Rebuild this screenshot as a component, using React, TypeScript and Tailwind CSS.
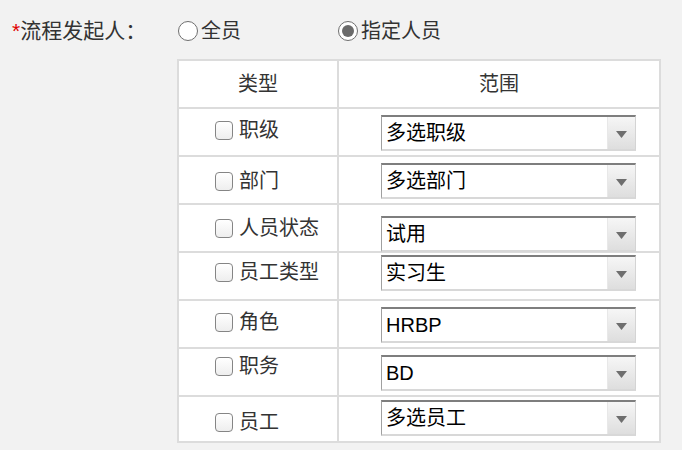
const rows = [
  { label: "职级", value: "多选职级", lt: "pt-[9px]", st: "pt-[6px]" },
  { label: "部门", value: "多选部门", lt: "pt-[12px]", st: "pt-[6px]" },
  { label: "人员状态", value: "试用", lt: "pt-[11px]", st: "pt-[11px]" },
  { label: "员工类型", value: "实习生", lt: "pt-[7px]", st: "pt-[2px]" },
  { label: "角色", value: "HRBP", lt: "pt-[9px]", st: "pt-[6px]" },
  { label: "职务", value: "BD", lt: "pt-[5px]", st: "pt-[6px]" },
  { label: "员工", value: "多选员工", lt: "pt-[13px]", st: "pt-[3px]" },
];

function Radio({ checked, label }: { checked?: boolean; label: string }) {
  return (
    <label className="flex items-center gap-[3px]">
      <span className="flex h-[20px] w-[20px] items-center justify-center rounded-full border-[1.5px] border-[#6f6f6f] bg-white">
        {checked && <span className="h-[12px] w-[12px] rounded-full bg-[#6a6a6a]" />}
      </span>
      <span>{label}</span>
    </label>
  );
}

function Checkbox() {
  return (
    <span className="inline-block h-[19px] w-[18px] rounded-[4px] border-[1.5px] border-[#858585] bg-gradient-to-b from-white to-[#eeeeee]" />
  );
}

function FakeSelect({ value }: { value: string }) {
  return (
    <div className="flex h-[36px] w-[255px] border-t-2 border-l border-r border-b-2 border-t-[#7e7e7e] border-l-[#a0a0a0] border-r-[#d4d4d4] border-b-[#d8d8d8] bg-white">
      <div className="flex flex-1 items-center pl-[4px] text-[20px] text-black">{value}</div>
      <div className="flex w-[28px] items-center justify-center border-l border-[#e8e8e8] bg-gradient-to-b from-[#f6f6f6] to-[#dedede]">
        <svg width="11" height="7" viewBox="0 0 11 7" className="mt-[3px]">
          <path d="M0 0h11L5.5 7z" fill="#6e6e6e" />
        </svg>
      </div>
    </div>
  );
}

export default function App() {
  return (
    <div
      className="h-[450px] w-[682px] overflow-hidden bg-[#f2f2f2] text-[#333]"
      style={{ fontFamily: '"Liberation Sans", "Noto Sans CJK SC", sans-serif' }}>
      {/* top line: initiator */}
      <div className="flex h-[59px] items-center pl-[12px] pt-[2px] text-[20px]">
        <span className="w-[166px] text-[21px]">
          <span className="text-[#e00000]">*</span>流程发起人：
        </span>
        <div className="w-[160px]">
          <Radio label="全员" />
        </div>
        <Radio checked label="指定人员" />
      </div>

      {/* scope table */}
      <div className="ml-[177px] w-[484px] border-2 border-[#dcdcdc] bg-white text-[20px]">
        <div className="flex h-[48px] border-b-2 border-[#dcdcdc]">
          <div className="flex w-[160px] items-center justify-center border-r-2 border-[#dcdcdc]">类型</div>
          <div className="flex flex-1 items-center justify-center">范围</div>
        </div>
        {rows.map((r, i) => (
          <div
            key={r.label}
            className={i < rows.length - 1 ? "flex h-[48px] border-b-2 border-[#dcdcdc]" : "flex h-[44px]"}>
            <div className={`w-[160px] border-r-2 border-[#dcdcdc] pl-[36px] ${r.lt}`}>
              <div className="flex h-[24px] items-center gap-[6px]">
                <Checkbox />
                <span>{r.label}</span>
              </div>
            </div>
            <div className={`flex-1 pl-[42px] ${r.st}`}>
              <FakeSelect value={r.value} />
            </div>
          </div>
        ))}
      </div>
    </div>
  );
}
